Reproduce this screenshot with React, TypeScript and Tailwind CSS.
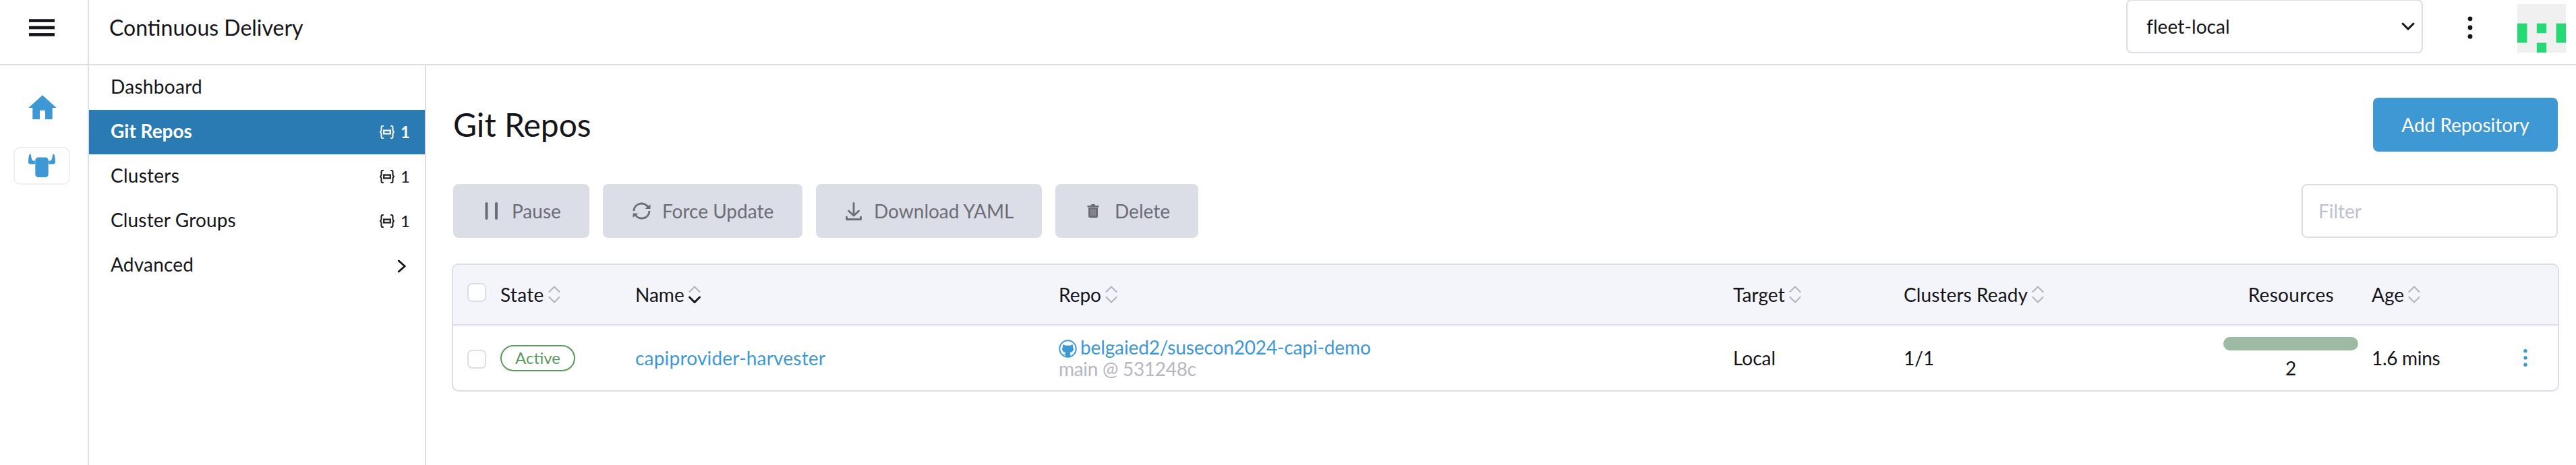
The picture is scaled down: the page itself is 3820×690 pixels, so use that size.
import React from "react";

type SortProps = { active?: boolean };

function SortIcon({ active }: SortProps) {
  return (
    <svg className="ml-[6px] h-[26px] w-[18px] shrink-0" viewBox="0 0 18 26" fill="none" strokeWidth="2.2" strokeLinecap="round">
      <path d="M1.5 9 L9 1.5 L16.5 9" stroke="#b6b6be" />
      <path d="M1.5 17 L9 24.5 L16.5 17" stroke={active ? "#141419" : "#b6b6be"} strokeWidth={active ? 3 : 2.2} />
    </svg>
  );
}

function NamespaceIcon() {
  return (
    <svg className="h-[20px] w-[22px]" viewBox="0 0 22 20" fill="none" stroke="currentColor" strokeWidth="2">
      <path d="M5.800 1 H4.500 Q2.500 1 2.500 3 V8 L1 10 L2.500 12 V17 Q2.500 19 4.500 19 H5.800" />
      <path d="M16.200 1 H17.500 Q19.500 1 19.500 3 V8 L21 10 L19.500 12 V17 Q19.500 19 17.500 19 H16.200" />
      <rect x="6.200" y="7.600" width="9.600" height="4.800" strokeWidth="2.200" />
    </svg>
  );
}

function Header() {
  return (
    <header className="flex h-[97px] shrink-0 border-b-2 border-[#dcdee7]">
      <div className="flex w-[132px] shrink-0 border-r-2 border-[#dcdee7] pt-[28px] pl-[43px]">
        <svg className="h-[26px] w-[38px]" viewBox="0 0 38 26" fill="#141419">
          <rect y="0.300" width="38" height="4.600" />
          <rect y="10.700" width="38" height="4.600" />
          <rect y="21.100" width="38" height="4.600" />
        </svg>
      </div>
      <div className="flex flex-1 items-start">
        <div className="mt-[21px] pl-[30px] text-[32px] leading-[40px]">Continuous Delivery</div>
        <div className="mt-[-1px] ml-auto flex h-[80px] w-[440px] items-center justify-between rounded-[8px] border-2 border-[#dcdee7] pr-[10px] pl-[28px]">
          <span className="text-[28px] leading-[34px] tracking-[0.1px]">fleet-local</span>
          <svg className="h-[12px] w-[20px]" viewBox="0 0 20 12" fill="none" stroke="#141419" strokeWidth="3">
            <path d="M1.200 1.200 L10 10 L18.800 1.200" />
          </svg>
        </div>
        <svg className="mt-[24px] ml-[66px] h-[34px] w-[8px]" viewBox="0 0 8 34" fill="#141419">
          <circle cx="4" cy="3.800" r="3.400" />
          <circle cx="4" cy="17" r="3.400" />
          <circle cx="4" cy="30.200" r="3.400" />
        </svg>
        <svg className="mt-[6px] mr-[15px] ml-[66px] h-[72px] w-[72px]" viewBox="0 0 5 5">
          <rect width="5" height="5" fill="#f0f0f0" />
          <path fill="#26d974" d="M0 2h1v2H0zM2 2h1v1H2zM4 2h1v2H4zM2 4h1v1H2z" />
        </svg>
      </div>
    </header>
  );
}

function Rail() {
  return (
    <nav className="w-[132px] shrink-0 border-r-2 border-[#dcdee7]">
      <svg className="mt-[44px] ml-[42px] h-[36px] w-[42px]" viewBox="0 0 42 36" fill="#3d98d3">
        <path d="M21 0.300 L41.700 19 H35.700 V36 H25 V22.700 H17 V36 H6.300 V19 H0.300 Z" />
      </svg>
      <div className="mt-[41px] ml-[20px] flex h-[56px] w-[84px] rounded-[10px] border-2 border-[#efeff4] pt-[8px] pl-[20px]">
        <svg className="h-[36px] w-[40px]" viewBox="0 0 40 36" fill="#3d98d3">
          <rect x="10.300" y="5.500" width="19.400" height="29.500" rx="4.500" />
          <path d="M1.700 1 Q3.500 -0.500 4 2 Q4.500 9 7 10.500 H10 V15.500 H3 Q0 15.500 0 12.500 Q0 5 1.700 1Z" />
          <path d="M38.300 1 Q36.500 -0.500 36 2 Q35.500 9 33 10.500 H30 V15.500 H37 Q40 15.500 40 12.500 Q40 5 38.300 1Z" />
        </svg>
      </div>
    </nav>
  );
}

type Item = { label: string; tracking: string; count?: number; selected?: boolean; expandable?: boolean };

const items: Item[] = [
  { label: "Dashboard", tracking: "tracking-[0.3px]" },
  { label: "Git Repos", tracking: "tracking-normal", count: 1, selected: true },
  { label: "Clusters", tracking: "tracking-[0.25px]", count: 1 },
  { label: "Cluster Groups", tracking: "tracking-[0.15px]", count: 1 },
  { label: "Advanced", tracking: "tracking-[0.2px]", expandable: true },
];

function SideNav() {
  return (
    <aside className="w-[500px] shrink-0 border-r-2 border-[#dcdee7]">
      {items.map((item) => (
        <div
          key={item.label}
          className={
            item.selected
              ? "flex h-[66px] items-center bg-[#2a7bb4] pr-[22px] pb-[4px] pl-[32px] font-bold text-white"
              : "flex h-[66px] items-center pr-[22px] pb-[4px] pl-[32px]"
          }
        >
          <span className={`text-[28px] leading-[34px] ${item.tracking}`}>{item.label}</span>
          {item.count !== undefined && (
            <span className="ml-auto flex items-center gap-[9px] pt-[4px] text-[24px] leading-[30px]">
              <NamespaceIcon />
              <span className="pb-[1px]">{item.count}</span>
            </span>
          )}
          {item.expandable && (
            <svg className="mt-[5px] mr-[6px] ml-auto h-[20px] w-[13px]" viewBox="0 0 13 20" fill="none" stroke="#141419" strokeWidth="2.800" strokeLinecap="round" strokeLinejoin="round">
              <path d="M2.300 2 L11.300 10 L2.300 18" />
            </svg>
          )}
        </div>
      ))}
    </aside>
  );
}

function PauseIcon() {
  return (
    <svg className="mr-[20px] ml-[3px] h-[26px] w-[20px]" viewBox="0 0 20 26" fill="#6c6c76">
      <rect x="0.500" width="4" height="26" rx="2" />
      <rect x="15" width="4" height="26" rx="2" />
    </svg>
  );
}

function RefreshIcon() {
  return (
    <svg className="mr-[17px] h-[26px] w-[27px]" viewBox="0 0 27 26" fill="none" stroke="#6c6c76" strokeWidth="3">
      <path d="M2 13 A11.300 11.300 0 0 1 23 7.500" />
      <path d="M25 13 A11.300 11.300 0 0 1 4 18.500" />
      <path d="M26.500 3 V10 H18.500 Z" fill="#6c6c76" stroke="none" />
      <path d="M0.500 23 V16.500 H8.500 Z" fill="#6c6c76" stroke="none" />
    </svg>
  );
}

function DownloadIcon() {
  return (
    <svg className="mr-[18px] h-[27px] w-[24px]" viewBox="0 0 24 27" fill="none" stroke="#6c6c76" strokeWidth="2.800" strokeLinecap="round" strokeLinejoin="round">
      <path d="M12 1.500 V19 M4.500 13 L12 20 L19.500 13" />
      <path d="M1.500 22 V25.500 H22.500 V22" />
    </svg>
  );
}

function TrashIcon() {
  return (
    <svg className="mr-[23px] ml-[3px] h-[20px] w-[18px]" viewBox="0 0 18 20" fill="#6c6c76">
      <path d="M0.500 2 H5.500 Q6 0 7.500 0 H10.500 Q12 0 12.500 2 H17.500 V4.500 H0.500Z" />
      <path d="M2 5 H16 V18 Q16 20 14 20 H4 Q2 20 2 18Z" />
      <path d="M6 7 V17 M9 7 V17 M12 7 V17" stroke="#a5a6af" strokeWidth="1" />
    </svg>
  );
}

type ActionProps = { icon: React.ReactNode; label: string; width: string };

function Action({ icon, label, width }: ActionProps) {
  return (
    <button className={`flex h-[80px] items-center rounded-[8px] bg-[#dcdee7] pl-[44px] text-[28px] leading-[34px] text-[#6c6c76] ${width}`}>
      {icon}
      <span>{label}</span>
    </button>
  );
}

const columns = "grid grid-cols-[70px_200px_628px_1000px_253px_473px_221px_1fr]";

function Checkbox() {
  return <span className="block h-[28px] w-[28px] rounded-[7px] border-2 border-[#dcdee7] bg-white" />;
}

type HeadProps = { label: string; active?: boolean; tracking?: string };

function Head({ label, active, tracking = "tracking-normal" }: HeadProps) {
  return (
    <div className="flex items-center">
      <span className={tracking}>{label}</span>
      <SortIcon active={active} />
    </div>
  );
}

function RepoTable() {
  return (
    <div className="mt-[38px] ml-[-2px] h-[190px] w-[3125px] overflow-hidden rounded-[10px] border-2 border-[#dcdee7] text-[28px] leading-[34px]">
      <div className={`${columns} h-[90px] items-center border-b-2 border-[#dcdee7] bg-[#f4f5fa]`}>
        <div className="mt-[-6px] pl-[21px]"><Checkbox /></div>
        <Head label="State" tracking="tracking-[0.3px]" />
        <Head label="Name" active />
        <Head label="Repo" />
        <Head label="Target" tracking="tracking-[0.1px]" />
        <Head label="Clusters Ready" tracking="tracking-[0.1px]" />
        <div className="pr-[56px] text-right tracking-[0.3px]">Resources</div>
        <Head label="Age" />
      </div>
      <div className={`${columns} h-[96px] items-center`}>
        <div className="mb-[-4px] pl-[21px]"><Checkbox /></div>
        <div>
          <span className="flex h-[39px] w-[111px] items-center justify-center rounded-full border-2 border-[#5d995d] text-[24px] leading-[30px] text-[#5d995d]">Active</span>
        </div>
        <div className="tracking-[0.2px] text-[#3d98d3]">capiprovider-harvester</div>
        <div className="leading-[32px]">
          <div className="flex h-[32px] items-center tracking-[-0.13px] text-[#3d98d3]">
            <svg className="mt-[4px] mr-[5px] h-[27px] w-[27px]" viewBox="0 0 27 27">
              <circle cx="13.500" cy="13.500" r="12.200" fill="none" stroke="#3d98d3" strokeWidth="2" />
              <path fill="#3d98d3" d="M6 7.500 Q8 7 10 8.800 Q13.500 8 17 8.800 Q19 7 21 7.500 Q21.500 9.500 21 11 Q23 14 21 17 Q19.500 19 16.500 19.300 Q17.500 20.500 17.500 26 H10 V22.500 Q7 23 6 20.500 Q8 21.500 10 21 Q10 19.800 10.500 19.300 Q7.500 19 6 17 Q4 14 6 11 Q5.500 9.500 6 7.500Z" />
            </svg>
            belgaied2/susecon2024-capi-demo
          </div>
          <div className="tracking-[-0.3px] text-[#b6b6c2]">main @ 531248c</div>
        </div>
        <div>Local</div>
        <div>1/1</div>
        <div className="flex flex-col items-center pt-[1px] pr-[20px] pl-[1px]">
          <div className="h-[20px] w-[200px] rounded-full bg-[#9dbba2]" />
          <div className="mt-[9px]">2</div>
        </div>
        <div className="flex items-center pr-[45px]">
          <span className="tracking-[-0.3px]">1.6 mins</span>
          <svg className="ml-auto h-[26px] w-[6px]" viewBox="0 0 6 26" fill="#3d98d3">
            <circle cx="3" cy="2.800" r="2.700" />
            <circle cx="3" cy="13" r="2.700" />
            <circle cx="3" cy="23.200" r="2.700" />
          </svg>
        </div>
      </div>
    </div>
  );
}

export default function App() {
  return (
    <div className="flex h-[690px] w-[3820px] flex-col overflow-hidden bg-white font-['Lato',sans-serif] text-[#141419]">
      <Header />
      <div className="flex flex-1">
        <Rail />
        <SideNav />
        <main className="min-w-0 flex-1 pt-[48px] pr-[27px] pl-[40px]">
          <div className="flex h-[80px] items-center justify-between">
            <h1 className="text-[48px] leading-[58px]">Git Repos</h1>
            <button className="h-[80px] w-[274px] rounded-[8px] bg-[#3d98d3] text-[28px] leading-[34px] text-white">Add Repository</button>
          </div>
          <div className="mt-[48px] flex gap-[20px]">
            <Action icon={<PauseIcon />} label="Pause" width="w-[202px]" />
            <Action icon={<RefreshIcon />} label="Force Update" width="w-[296px]" />
            <Action icon={<DownloadIcon />} label="Download YAML" width="w-[335px]" />
            <Action icon={<TrashIcon />} label="Delete" width="w-[212px]" />
            <input placeholder="Filter" className="ml-auto h-[80px] w-[380px] rounded-[8px] border-2 border-[#dcdee7] pl-[23px] text-[28px] placeholder:text-[#bec1d2]" />
          </div>
          <RepoTable />
        </main>
      </div>
    </div>
  );
}
